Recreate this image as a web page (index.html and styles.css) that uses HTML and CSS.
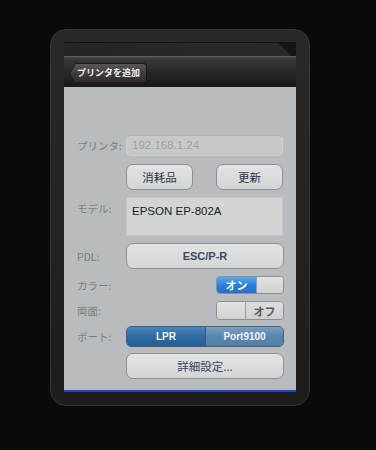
FILE: index.html
```
<!DOCTYPE html>
<html>
<head>
<meta charset="utf-8">
<link rel="stylesheet" href="styles.css">
</head>
<body>
<div class="device">
  <div class="screen">
    <div class="status"></div>
    <div class="navbar">
      <div class="back"><span class="back-text">プリンタを追加</span></div>
    </div>
    <div class="content">
      <div class="row r-printer">
        <div class="label">プリンタ:</div>
        <div class="field">192.168.1.24</div>
      </div>
      <div class="row r-buttons">
        <div class="label"></div>
        <div class="btnpair">
          <div class="btn small">消耗品</div>
          <div class="btn small">更新</div>
        </div>
      </div>
      <div class="row r-model">
        <div class="label">モデル:</div>
        <div class="modelbox">EPSON EP-802A</div>
      </div>
      <div class="row r-pdl">
        <div class="label">PDL:</div>
        <div class="btn wide bold">ESC/P-R</div>
      </div>
      <div class="row r-color">
        <div class="label">カラー:</div>
        <div class="switch on"><span class="on-part">オン</span><span class="knob"></span></div>
      </div>
      <div class="row r-duplex">
        <div class="label">両面:</div>
        <div class="switch off"><span class="knob"></span><span class="off-part">オフ</span></div>
      </div>
      <div class="row r-port">
        <div class="label">ポート:</div>
        <div class="segmented">
          <div class="seg selected">LPR</div>
          <div class="seg">Port9100</div>
        </div>
      </div>
      <div class="row r-detail">
        <div class="label"></div>
        <div class="btn wide detail">詳細設定...</div>
      </div>
    </div>
  </div>
</div>
</body>
</html>
```
FILE: styles.css
```
* { box-sizing: border-box; }
html, body { margin: 0; padding: 0; }
body {
  width: 376px;
  height: 450px;
  background: #0b0a0a;
  font-family: "Liberation Sans", "Noto Sans CJK JP", sans-serif;
  overflow: hidden;
}
.device {
  margin: 29px 0 0 50px;
  width: 260px;
  height: 377px;
  border-radius: 16px;
  background: linear-gradient(180deg, #2a2828 0%, #1d1b1b 100%);
  border: 1px solid #363434;
  padding: 12px 13px 0 13px;
}
.screen {
  width: 232px;
  display: flex;
  flex-direction: column;
}
.status {
  height: 14px;
  background: linear-gradient(225deg, #151313 0%, #151313 7%, #2a2828 7.5%, #262424 100%);
  border-top: 1px solid #141212;
}
.navbar {
  height: 31px;
  background: linear-gradient(180deg, #4a4646 0%, #3a3636 8%, #2a2626 50%, #1a1818 100%);
  border-top: 1px solid #625e5e;
  padding: 5px 0 0 11px;
}
.back {
  position: relative;
  display: inline-flex;
  align-items: center;
  height: 20px;
  padding: 0 6px 0 2px;
  background: linear-gradient(180deg, #5a5656 0%, #403c3c 50%, #302c2c 100%);
  border: 1px solid #1a1818;
  border-left: none;
  border-radius: 0 4px 4px 0;
}
.back::before {
  content: "";
  position: absolute;
  left: -7px;
  top: 2px;
  width: 14px;
  height: 14px;
  transform: scaleX(0.6) rotate(45deg);
  background: linear-gradient(135deg, #5a5656 0%, #403c3c 50%, #302c2c 100%);
  border-left: 1px solid #1a1818;
  border-bottom: 1px solid #1a1818;
  border-radius: 0 0 0 2px;
}
.back-text {
  position: relative;
  color: #f2f2f2;
  font-family: "Noto Sans CJK JP", sans-serif;
  font-weight: bold;
  font-size: 9px;
}
.content {
  height: 305px;
  background: #b8bcbe;
  border-bottom: 2px solid #2244c8;
  padding: 48px 12px 0 13px;
  display: flex;
  flex-direction: column;
}
.row {
  display: flex;
  align-items: center;
}
.label {
  width: 49px;
  flex: none;
  color: #7a7e82;
  font-family: "Noto Sans CJK JP", sans-serif;
  font-size: 10.5px;
}
.r-printer { height: 21px; }
.r-buttons { height: 26px; margin-top: 8px; }
.r-model { height: 39px; margin-top: 7px; align-items: flex-start; }
.r-model .label { padding-top: 4px; }
.r-pdl { height: 26px; margin-top: 7px; }
.r-color { height: 18px; margin-top: 7px; }
.r-duplex { height: 19px; margin-top: 7px; }
.r-port { height: 21px; margin-top: 6px; }
.r-detail { height: 26px; margin-top: 6px; }

.field {
  width: 157px;
  height: 21px;
  background: #c6c9cb;
  border: 1px solid #cfd2d3;
  border-top-color: #aeb2b4;
  border-radius: 5px;
  color: #9c9fa2;
  font-size: 11.5px;
  line-height: 19px;
  padding-left: 5px;
}
.btnpair {
  width: 157px;
  display: flex;
  justify-content: space-between;
}
.btn {
  height: 26px;
  background: linear-gradient(180deg, #e2e3e3 0%, #d4d6d6 100%);
  border: 1px solid #8c9092;
  border-radius: 7px;
  display: flex;
  align-items: center;
  justify-content: center;
  color: #2c3344;
  font-family: "Noto Sans CJK JP", sans-serif;
  font-size: 11.5px;
}
.btn.small { width: 67px; }
.btn.wide { width: 158px; }
.btn.bold {
  font-family: "Liberation Sans", sans-serif;
  font-weight: bold;
  font-size: 11px;
  color: #3a4a66;
}
.btn.detail { color: #3a4660; font-size: 11.5px; }
.modelbox {
  width: 157px;
  height: 39px;
  background: #d3d5d5;
  border: 1px solid #c4c7c8;
  color: #1c1c1c;
  font-size: 11.5px;
  padding: 7px 0 0 5px;
}
.row .switch { margin-left: 90px; }
.switch {
  width: 68px;
  height: 100%;
  display: flex;
  border: 1px solid #8c9092;
  border-radius: 4px;
  overflow: hidden;
  font-family: "Noto Sans CJK JP", sans-serif;
  font-weight: bold;
  font-size: 11px;
}
.switch .on-part {
  width: 39px;
  background: linear-gradient(180deg, #5aa8ee 0%, #2a7cd8 55%, #2270cc 100%);
  color: #fff;
  display: flex;
  align-items: center;
  justify-content: center;
}
.switch .knob {
  flex: 1;
  background: linear-gradient(180deg, #e2e3e3 0%, #d0d2d2 100%);
  border-left: 1px solid #9a9ea0;
}
.switch.off .knob {
  flex: none;
  width: 29px;
  border-left: none;
  border-right: 1px solid #9a9ea0;
}
.switch .off-part {
  flex: 1;
  background: linear-gradient(180deg, #dcdddd 0%, #cfd1d1 100%);
  color: #55585a;
  display: flex;
  align-items: center;
  justify-content: center;
}
.segmented {
  width: 158px;
  height: 21px;
  display: flex;
  border: 1px solid #44607a;
  border-radius: 5px;
  overflow: hidden;
  font-family: "Liberation Sans", sans-serif;
  font-weight: bold;
  font-size: 10px;
  color: #f4f6f8;
}
.seg {
  display: flex;
  align-items: center;
  justify-content: center;
}
.seg.selected {
  width: 79px;
  background: linear-gradient(180deg, #4a86b8 0%, #2e6aa0 50%, #245e94 100%);
  border-right: 1px solid #3a5a78;
}
.seg:not(.selected) {
  flex: 1;
  background: linear-gradient(180deg, #7aa0c0 0%, #5a86ac 50%, #5280a6 100%);
}
```
